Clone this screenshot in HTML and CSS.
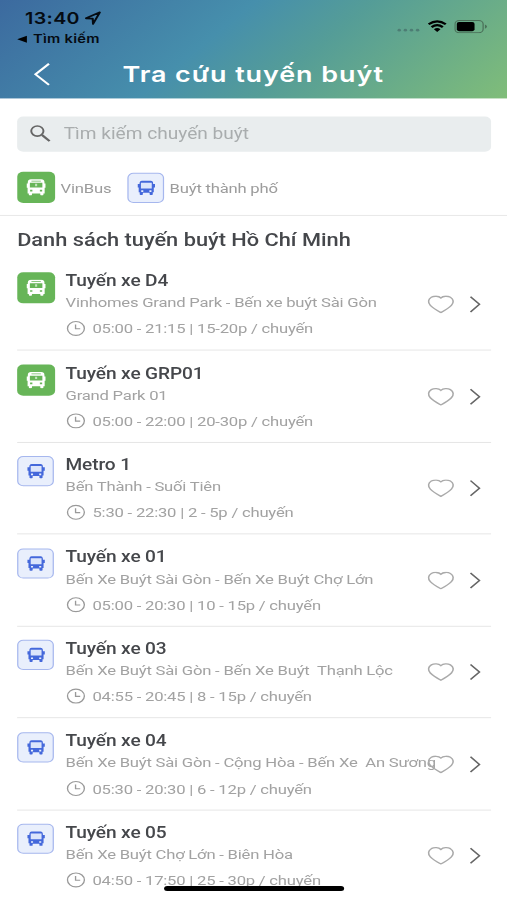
FILE: index.html
```html
<!DOCTYPE html>
<html lang="vi">
<head>
    <meta charset="UTF-8">
    <meta name="viewport" content="width=device-width, initial-scale=1.0">
    <title>Tra cứu tuyến buýt</title>
    <link rel="stylesheet" href="styles.css">
</head>
<body>
    <svg class="sprite">
        <symbol id="vinbus" viewBox="0 0 20 18" preserveAspectRatio="none">
            <path fill="#fff" fill-rule="evenodd" d="M5 .5h10q2.800 0 3 3v1.500h1v4.500h-.8v6h-1.200v1.200q0 .8-.8.8h-1.400q-.8 0-.8-.8v-1.200H6v1.200q0 .8-.8.8H3.800q-.8 0-.8-.8v-1.200H1.800v-6H1V5h1V3.500Q2.200.5 5 .5zM5.500 2v.8h9V2zM4 4.200v5h12v-5zM4.200 11.500v1.800h2.200v-1.800zM13.600 11.500v1.800h2.200v-1.800z"/>
            <path fill="#fff" d="M9 5.300h2v2.500H9z" opacity=".6"/>
        </symbol>
        <symbol id="citybus" viewBox="0 0 18 18" preserveAspectRatio="none">
            <path fill="#dce5fb" d="M3.500 3h11v7h-11z"/>
            <path fill="#4468db" fill-rule="evenodd" d="M4.500 1h9q1.800 0 2 1.800l.2 2h1.800v3.700h-1.200v5.500h-1v2.200q0 .8-.8.8h-1.500q-.8 0-.8-.8v-1.600H5.600v1.600q0 .8-.8.8H3.300q-.8 0-.8-.8V14h-1V8.500H.5V4.800h1.800l.2-2Q2.700 1 4.500 1zM3.700 3.200v6.500h10.600v-6.500zM4 11.800v1.800h2v-1.800zM12 11.800v1.800h2v-1.800z"/>
        </symbol>
        <symbol id="clock" viewBox="0 0 16 16">
            <circle cx="8" cy="8" r="6.900" fill="none" stroke="#999" stroke-width="1.100"/>
            <path d="M7.700 4v4.300h3.800" fill="none" stroke="#999" stroke-width="1.100"/>
        </symbol>
        <symbol id="heart" viewBox="0 0 22 18">
            <path d="M11 2.700C9.200.6 5.500.4 3.200 1.900C.4 3.900.3 7.200 2.400 10C4.500 12.800 8 15.200 11 17.200C14 15.200 17.500 12.800 19.600 10C21.700 7.200 21.600 3.900 18.800 1.900C16.500.4 12.800.6 11 2.700z" fill="none" stroke="#aaa" stroke-width="1.300"/>
        </symbol>
        <symbol id="chevron" viewBox="0 0 10 18">
            <path d="M1.200 1.500L8.500 9L1.200 16.500" fill="none" stroke="#666" stroke-width="1.400"/>
        </symbol>
    </svg>

    <div class="screen">
        <header class="header">
            <div class="status">
                <div class="status-left">
                    <div class="clock-row">
                        <span class="time">13:40</span>
                        <svg class="location" viewBox="0 0 14 14"><path d="M1.200 7.200L12.500 1.300L7 12.800L6.700 7.500z" fill="none" stroke="#050b12" stroke-width="1.700" stroke-linejoin="round"/></svg>
                    </div>
                    <div class="back-app"><svg class="back-arrow" viewBox="0 0 8 8"><path d="M0 4L8 .5v7z"/></svg>Tìm kiếm</div>
                </div>
                <div class="status-right">
                    <svg class="signal" viewBox="0 0 19 4"><g fill="#4d7d74"><circle cx="2" cy="2" r="1.400"/><circle cx="7" cy="2" r="1.400"/><circle cx="12" cy="2" r="1.400"/><circle cx="17" cy="2" r="1.400"/></g></svg>
                    <svg class="wifi" viewBox="0 0 16 12"><path d="M1 4.200Q8-1.800 15 4.200M3.400 7Q8 3.100 12.600 7" fill="none" stroke="#000" stroke-width="2.100"/><path d="M5.300 9Q8 6.800 10.700 9L8 11.900z"/></svg>
                    <svg class="battery" viewBox="0 0 27 13"><rect x=".5" y=".5" width="23" height="12" rx="3.500" fill="none" stroke="#4a6f58"/><rect x="2" y="2" width="14.500" height="9" rx="1.800"/><path d="M25 4.300q1.600.7 1.600 2.200t-1.600 2.200z" fill="#4a6f58"/></svg>
                </div>
            </div>
            <div class="nav">
                <svg class="nav-back" viewBox="0 0 14 24"><path d="M13 1.500L2 12l11 10.500" fill="none" stroke="#fff" stroke-width="1.900"/></svg>
                <h1>Tra cứu tuyến buýt</h1>
            </div>
        </header>

        <div class="search">
            <svg class="search-icon" viewBox="0 0 18 18"><circle cx="6.500" cy="6.500" r="5" fill="none" stroke="#666" stroke-width="1.600"/><path d="M10.300 10.300L16.500 16.500" stroke="#666" stroke-width="2.100"/></svg>
            <span>Tìm kiếm chuyến buýt</span>
        </div>

        <div class="filters">
            <div class="badge green"><svg><use href="#vinbus"/></svg></div>
            <span class="filter-name vin">VinBus</span>
            <div class="badge blue"><svg><use href="#citybus"/></svg></div>
            <span class="filter-name">Buýt thành phố</span>
        </div>

        <h2>Danh sách tuyến buýt Hồ Chí Minh</h2>

        <div class="routes">
            <div class="route">
                <div class="badge green"><svg><use href="#vinbus"/></svg></div>
                <div class="info">
                    <h3>Tuyến xe D4</h3>
                    <p class="path">Vinhomes Grand Park - Bến xe buýt Sài Gòn</p>
                    <p class="hours"><svg><use href="#clock"/></svg>05:00 - 21:15 | 15-20p / chuyến</p>
                </div>
                <svg class="heart"><use href="#heart"/></svg>
                <svg class="chevron"><use href="#chevron"/></svg>
            </div>
            <div class="route">
                <div class="badge green"><svg><use href="#vinbus"/></svg></div>
                <div class="info">
                    <h3>Tuyến xe GRP01</h3>
                    <p class="path">Grand Park 01</p>
                    <p class="hours"><svg><use href="#clock"/></svg>05:00 - 22:00 | 20-30p / chuyến</p>
                </div>
                <svg class="heart"><use href="#heart"/></svg>
                <svg class="chevron"><use href="#chevron"/></svg>
            </div>
            <div class="route">
                <div class="badge blue"><svg><use href="#citybus"/></svg></div>
                <div class="info">
                    <h3>Metro 1</h3>
                    <p class="path">Bến Thành - Suối Tiên</p>
                    <p class="hours"><svg><use href="#clock"/></svg>5:30 - 22:30 | 2 - 5p / chuyến</p>
                </div>
                <svg class="heart"><use href="#heart"/></svg>
                <svg class="chevron"><use href="#chevron"/></svg>
            </div>
            <div class="route">
                <div class="badge blue"><svg><use href="#citybus"/></svg></div>
                <div class="info">
                    <h3>Tuyến xe 01</h3>
                    <p class="path">Bến Xe Buýt Sài Gòn - Bến Xe Buýt Chợ Lớn</p>
                    <p class="hours"><svg><use href="#clock"/></svg>05:00 - 20:30 | 10 - 15p / chuyến</p>
                </div>
                <svg class="heart"><use href="#heart"/></svg>
                <svg class="chevron"><use href="#chevron"/></svg>
            </div>
            <div class="route">
                <div class="badge blue"><svg><use href="#citybus"/></svg></div>
                <div class="info">
                    <h3>Tuyến xe 03</h3>
                    <p class="path">Bến Xe Buýt Sài Gòn - Bến Xe Buýt  Thạnh Lộc</p>
                    <p class="hours"><svg><use href="#clock"/></svg>04:55 - 20:45 | 8 - 15p / chuyến</p>
                </div>
                <svg class="heart"><use href="#heart"/></svg>
                <svg class="chevron"><use href="#chevron"/></svg>
            </div>
            <div class="route">
                <div class="badge blue"><svg><use href="#citybus"/></svg></div>
                <div class="info">
                    <h3>Tuyến xe 04</h3>
                    <p class="path">Bến Xe Buýt Sài Gòn - Cộng Hòa - Bến Xe  An Sương</p>
                    <p class="hours"><svg><use href="#clock"/></svg>05:30 - 20:30 | 6 - 12p / chuyến</p>
                </div>
                <svg class="heart"><use href="#heart"/></svg>
                <svg class="chevron"><use href="#chevron"/></svg>
            </div>
            <div class="route">
                <div class="badge blue"><svg><use href="#citybus"/></svg></div>
                <div class="info">
                    <h3>Tuyến xe 05</h3>
                    <p class="path">Bến Xe Buýt Chợ Lớn - Biên Hòa</p>
                    <p class="hours"><svg><use href="#clock"/></svg>04:50 - 17:50 | 25 - 30p / chuyến</p>
                </div>
                <svg class="heart"><use href="#heart"/></svg>
                <svg class="chevron"><use href="#chevron"/></svg>
            </div>
        </div>
        <div class="home-bar"></div>
    </div>
</body>
</html>
```
FILE: styles.css
```css
* {
    box-sizing: border-box;
}
html, body {
    width: 507px;
    height: 900px;
    overflow: hidden;
}
body {
    margin: 0;
    background: #fff;
    font-family: Roboto, "Noto Sans", sans-serif;
}
h1, h2, h3, p {
    margin: 0;
}
svg {
    display: block;
    flex: none;
}
.sprite {
    display: none;
}
/* 414x896 phone layout stretched over the window */
.screen {
    position: relative;
    width: 414px;
    height: 896px;
    overflow: hidden;
    white-space: nowrap;
    transform: scale(1.22464, 1.00446);
    transform-origin: 0 0;
}
.header {
    height: 97.5px;
    background: linear-gradient(135deg, #3c6a9f 0%, #468fac 41%, #559d97 60%, #80bd79 100%);
}
.status {
    display: flex;
    justify-content: space-between;
    height: 54px;
    padding: 9px 16px 0 14px;
    font-family: Inter, sans-serif;
    color: #050b12;
}
.clock-row {
    display: flex;
    align-items: center;
    gap: 4px;
    height: 18px;
    padding-left: 6.5px;
}
.time {
    font-size: 16px;
    font-weight: 600;
    letter-spacing: 0.3px;
}
.location {
    width: 14px;
    height: 14px;
}
.back-app {
    display: flex;
    align-items: center;
    gap: 5px;
    height: 15px;
    margin-top: 4px;
    font-size: 12px;
    font-weight: 600;
    letter-spacing: 0.2px;
}
.back-arrow {
    width: 8px;
    height: 8px;
}
.status-right {
    display: flex;
    align-items: center;
    gap: 6px;
    height: 34px;
}
.signal {
    width: 19px;
    height: 4px;
    margin-top: 8px;
}
.wifi {
    width: 16px;
    height: 12px;
}
.battery {
    width: 27px;
    height: 13px;
}
.nav {
    display: flex;
    align-items: center;
    height: 40px;
    padding-left: 27px;
    color: #fff;
}
.nav-back {
    width: 14px;
    height: 24px;
}
h1 {
    margin-left: 59px;
    font-family: Inter, sans-serif;
    font-size: 22px;
    font-weight: 600;
    letter-spacing: 0.75px;
    line-height: 30px;
}
.search {
    display: flex;
    align-items: center;
    height: 35.5px;
    margin: 18px 13.5px 0 14px;
    padding-left: 10px;
    border-radius: 5px;
    background: #e9edee;
    color: #a9adae;
    font-size: 15.6px;
}
.search-icon {
    width: 18px;
    height: 18px;
    margin-right: 10px;
}
.filters {
    display: flex;
    align-items: center;
    height: 64px;
    padding: 8px 14px 0;
    border-bottom: 1.5px solid #e9e9e9;
}
.badge {
    display: flex;
    flex: none;
    align-items: center;
    justify-content: center;
    width: 31px;
    height: 31px;
    border-radius: 5px;
}
.badge svg {
    width: 17px;
    height: 17px;
}
.green {
    background: #67b558;
}
.blue {
    width: 30px;
    height: 30px;
    border: 1px solid #a6b7ee;
    background: #e9effc;
}
.blue svg {
    width: 15px;
    height: 16px;
}
.filter-name {
    margin-left: 4.5px;
    color: #9c9c9c;
    font-size: 13.6px;
    letter-spacing: -0.18px;
}
.filter-name.vin {
    width: 40px;
    margin-right: 14.5px;
}
h2 {
    height: 42.5px;
    padding: 10px 0 0 14px;
    color: #45474b;
    font-size: 17.8px;
    font-weight: 500;
    line-height: 27px;
}
.route {
    display: flex;
    height: 91.5px;
    margin: 0 13.5px 0 14px;
    padding-top: 13.5px;
    border-bottom: 1.5px solid #e6e6e6;
}
.info {
    width: 295.5px;
    margin-left: 8.5px;
}
.route .blue + .info {
    margin-left: 9.5px;
}
h3 {
    color: #45474b;
    font-size: 15.6px;
    font-weight: 500;
    line-height: 19px;
    letter-spacing: -0.1px;
}
.path, .hours {
    color: #a2a2a2;
    font-size: 13.6px;
    line-height: 22px;
    white-space: pre;
    letter-spacing: -0.18px;
}
.hours {
    display: flex;
    align-items: center;
    gap: 5.5px;
    margin-top: 4px;
}
.hours svg {
    width: 16px;
    height: 16px;
    margin-left: 0.5px;
}
.heart {
    width: 22px;
    height: 18px;
    margin: 23px 12px 0 0;
}
.chevron {
    width: 10px;
    height: 18px;
    margin-top: 23px;
}
.home-bar {
    position: absolute;
    left: 134px;
    bottom: 9px;
    width: 147px;
    height: 5px;
    border-radius: 3px;
    background: #000;
}
```
